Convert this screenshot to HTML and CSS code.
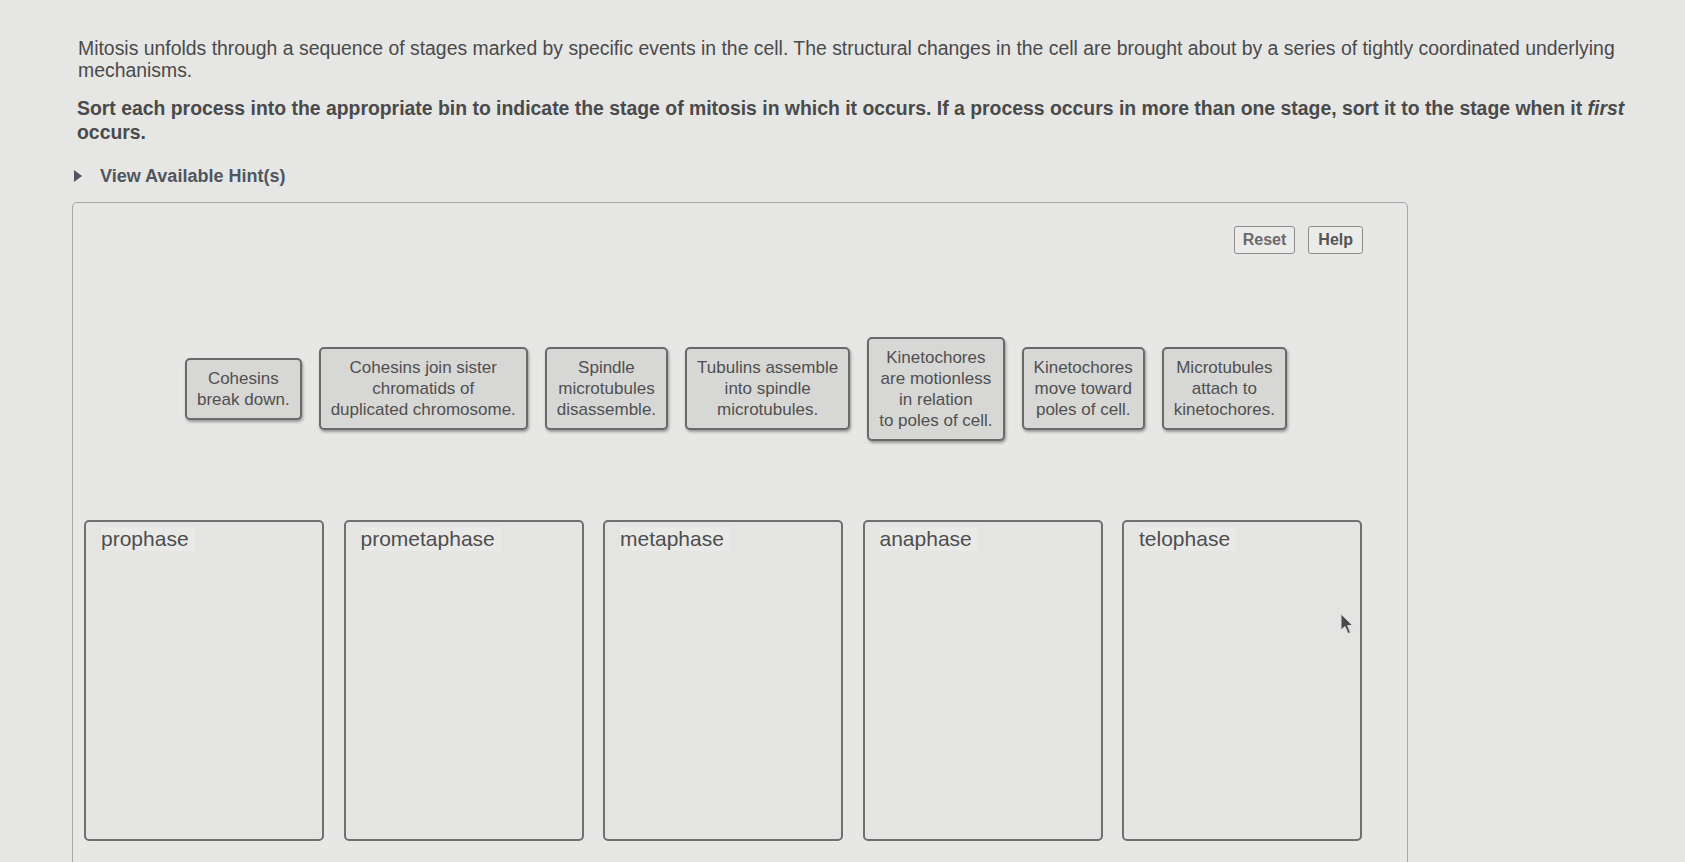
FILE: index.html
```html
<!DOCTYPE html>
<html>
<head>
<meta charset="utf-8">
<link rel="stylesheet" href="styles.css">
</head>
<body>
<div class="page">
  <p class="intro">Mitosis unfolds through a sequence of stages marked by specific events in the cell. The structural changes in the cell are brought about by a series of tightly coordinated underlying mechanisms.</p>
  <p class="task">Sort each process into the appropriate bin to indicate the stage of mitosis in which it occurs. If a process occurs in more than one stage, sort it to the stage when it <em>first</em> occurs.</p>
  <div class="hint"><span class="tri"></span>View Available Hint(s)</div>
  <div class="panel">
    <div class="toolbar">
      <button class="btn reset">Reset</button>
      <button class="btn help">Help</button>
    </div>
    <div class="items">
      <div class="item">Cohesins<br>break down.</div>
      <div class="item">Cohesins join sister<br>chromatids of<br>duplicated chromosome.</div>
      <div class="item">Spindle<br>microtubules<br>disassemble.</div>
      <div class="item">Tubulins assemble<br>into spindle<br>microtubules.</div>
      <div class="item">Kinetochores<br>are motionless<br>in relation<br>to poles of cell.</div>
      <div class="item">Kinetochores<br>move toward<br>poles of cell.</div>
      <div class="item">Microtubules<br>attach to<br>kinetochores.</div>
    </div>
    <div class="bins">
      <div class="bin"><span class="label">prophase</span></div>
      <div class="bin"><span class="label">prometaphase</span></div>
      <div class="bin"><span class="label">metaphase</span></div>
      <div class="bin"><span class="label">anaphase</span></div>
      <div class="bin"><span class="label">telophase</span></div>
    </div>
    <svg class="cursor" width="14" height="22" viewBox="0 0 14 22"><path d="M1 1 L1 17 L5 13.5 L8 20.5 L10.5 19.5 L7.6 12.6 L12.8 12.6 Z" fill="#4a4a4a" stroke="#dcdcdc" stroke-width="1"/></svg>
  </div>
</div>
</body>
</html>
```

FILE: styles.css
```css
html, body {
  margin: 0;
  padding: 0;
}
body {
  background: #e6e6e5;
  font-family: "Liberation Sans", Arial, sans-serif;
  color: #464646;
  height: 862px;
  overflow: hidden;
}
.page {
  padding: 37px 0 0 72px;
}
.intro {
  margin: 0;
  padding-left: 6px;
  width: 1560px;
  font-size: 19.4px;
  line-height: 22px;
  color: #4a4a4a;
}
.task {
  margin: 15px 0 0 0;
  padding-left: 5px;
  width: 1565px;
  font-size: 19.4px;
  line-height: 24px;
  font-weight: bold;
  color: #4a4a4a;
}
.task em {
  font-style: italic;
}
.hint {
  margin-top: 21px;
  display: flex;
  align-items: center;
  font-size: 18px;
  line-height: 22px;
  font-weight: bold;
  color: #4f5660;
}
.tri {
  width: 0;
  height: 0;
  border-top: 6px solid transparent;
  border-bottom: 6px solid transparent;
  border-left: 8px solid #4f5660;
  margin: 0 18px 0 2px;
}
.panel {
  position: relative;
  margin-top: 15px;
  width: 1336px;
  height: 700px;
  border: 1px solid #a9a9a9;
  border-radius: 5px;
  background: #e7e7e6;
  box-sizing: border-box;
}
.toolbar {
  display: flex;
  justify-content: flex-end;
  gap: 13px;
  padding: 23px 44px 0 0;
}
.btn {
  height: 28px;
  box-sizing: border-box;
  padding: 0 8px;
  border: 1px solid #8d8d8d;
  border-radius: 3px;
  background: #ebebea;
  font-family: "Liberation Sans", Arial, sans-serif;
  font-weight: bold;
  font-size: 16px;
  color: #6a6a6a;
}
.help {
  color: #555;
  padding: 0 9px;
}
.items {
  display: flex;
  align-items: center;
  gap: 17px;
  margin-top: 82px;
  padding-left: 112px;
  height: 105px;
}
.item {
  padding: 8px 10px;
  border: 2px solid #6a6a6a;
  border-radius: 5px;
  background: #d7d7d6;
  box-shadow: 1px 2px 3px rgba(0, 0, 0, 0.35);
  font-size: 17px;
  line-height: 21px;
  text-align: center;
  white-space: nowrap;
  color: #505050;
}
.bins {
  display: flex;
  gap: 19.5px;
  margin-top: 79px;
  padding-left: 11px;
}
.bin {
  width: 240px;
  height: 321px;
  box-sizing: border-box;
  border: 2px solid #707070;
  border-radius: 5px;
  background: #e4e4e3;
  padding: 5px 0 0 15px;
}
.label {
  display: inline-block;
  font-size: 21px;
  line-height: 24px;
  color: #4e4e4e;
  background: #e9e9e8;
  padding-right: 6px;
}
.cursor {
  position: absolute;
  left: 1267px;
  top: 410px;
}
```
